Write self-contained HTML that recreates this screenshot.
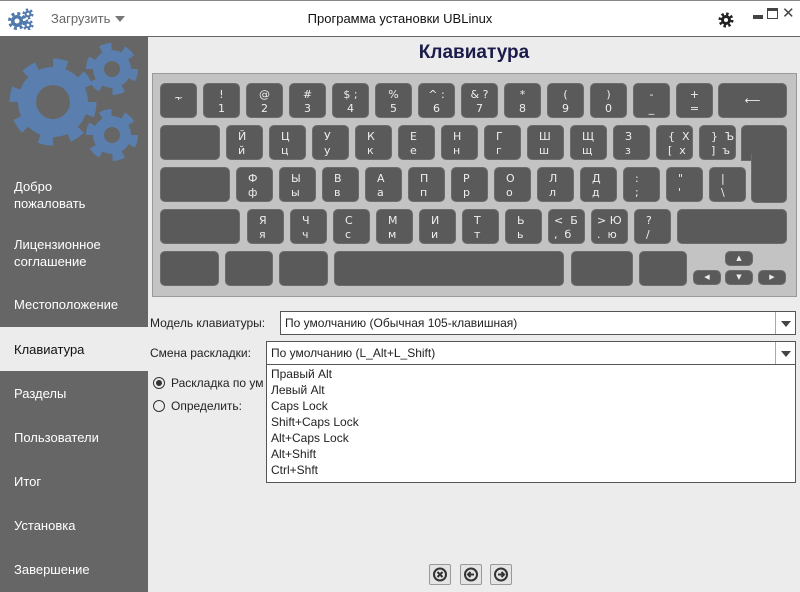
<!DOCTYPE html>
<html><head><meta charset="utf-8"><style>
*{margin:0;padding:0;box-sizing:border-box}
body{width:800px;height:592px;overflow:hidden;background:#ececec;font-family:"Liberation Sans","DejaVu Sans",sans-serif;position:relative;font-size:12px;color:#222}
.a{position:absolute}
#hdr{left:0;top:0;width:800px;height:37px;background:#fff;border-bottom:1px solid #666;border-top:1px solid #888}
#side{left:0;top:37px;width:148px;height:555px;background:#666}
.si{position:absolute;left:14px;color:#fff;font-size:13px;line-height:17px}
#kb{left:152px;top:73px;width:645px;height:224px;background:#c3c3c3;border:1px solid #999}
.k{position:absolute;background:#5a5a5a;border-radius:5px;border:1px solid #6c6c6c;color:#eee;font-family:"DejaVu Sans",sans-serif;font-size:11px;line-height:15px}
.k .t{position:absolute;left:11px;top:3px}
.k .b{position:absolute;left:11px;top:17px}
.k.c .t,.k.c .b{left:0;width:100%;text-align:center}
.combo{position:absolute;background:#fff;border:1px solid #555;font-size:12px;line-height:22px;padding-left:4px}
.arr{position:absolute;right:0;top:0;width:20px;height:22px;border-left:1px solid #aaa}
.arr:after{content:"";position:absolute;left:5px;top:9px;border:5px solid transparent;border-top:6px solid #444;border-bottom:0}
.btn{position:absolute;top:564px;width:22px;height:21px;border:1px solid #999;background:#e4e4e4;border-radius:2px}
</style></head><body>
<div id="hdr" class="a">
 <svg class="a" style="left:8px;top:7px" width="26" height="22" viewBox="0 0 26 22">
  <g fill="#4f79ad"><circle cx="9" cy="13" r="6"/><circle cx="9" cy="13" r="7.5" fill="none" stroke="#4f79ad" stroke-width="3" stroke-dasharray="3 2.9"/><circle cx="9" cy="13" r="2.5" fill="#fff"/>
  <circle cx="20" cy="6" r="3.5"/><circle cx="20" cy="6" r="4.5" fill="none" stroke="#4f79ad" stroke-width="2" stroke-dasharray="2.4 2.3"/><circle cx="20" cy="6" r="1.4" fill="#fff"/>
  <circle cx="20" cy="17" r="3.5"/><circle cx="20" cy="17" r="4.5" fill="none" stroke="#4f79ad" stroke-width="2" stroke-dasharray="2.4 2.3"/><circle cx="20" cy="17" r="1.4" fill="#fff"/></g></svg>
 <div class="a" style="left:51px;top:10px;color:#666;font-size:13px">Загрузить</div>
 <div class="a" style="left:115px;top:15px;border:5px solid transparent;border-top:6px solid #777;border-bottom:0"></div>
 <div class="a" style="left:0;width:800px;top:10px;text-align:center;font-size:13px;color:#111">Программа установки UBLinux</div>
 <svg class="a" style="left:718px;top:11px" width="16" height="16" viewBox="0 0 16 16"><circle cx="8" cy="8" r="5" fill="#222"/><circle cx="8" cy="8" r="6" fill="none" stroke="#222" stroke-width="3" stroke-dasharray="2.4 2.3"/><circle cx="8" cy="8" r="2" fill="#fff"/></svg>
 <div class="a" style="left:753px;top:14px;width:10px;height:4px;background:#444"></div>
 <div class="a" style="left:767px;top:7px;width:11px;height:11px;border:1px solid #444;border-top:3px solid #444"></div>
 <div class="a" style="left:782px;top:3px;font-size:15px;color:#444">✕</div>
</div>
<div id="side" class="a">
 <svg class="a" style="left:0;top:0" width="148" height="130" viewBox="0 37 148 130">
  <g fill="#5a7fae">
   <circle cx="53" cy="102" r="35"/><circle cx="53" cy="102" r="39" fill="none" stroke="#5a7fae" stroke-width="9" stroke-dasharray="14 16.6"/>
   <circle cx="112" cy="69" r="19"/><circle cx="112" cy="69" r="22" fill="none" stroke="#5a7fae" stroke-width="8" stroke-dasharray="11 12"/>
   <circle cx="112" cy="135" r="19"/><circle cx="112" cy="135" r="22" fill="none" stroke="#5a7fae" stroke-width="8" stroke-dasharray="11 12"/>
  </g>
  <circle cx="53" cy="102" r="17" fill="#666"/><circle cx="112" cy="69" r="8" fill="#666"/><circle cx="112" cy="135" r="8" fill="#666"/>
 </svg>
 <div class="si" style="top:141px">Добро<br>пожаловать</div>
 <div class="si" style="top:199px">Лицензионное<br>соглашение</div>
 <div class="si" style="top:259px">Местоположение</div>
 <div class="a" style="left:0;top:290px;width:148px;height:44px;background:#ececec"></div>
 <div class="si" style="top:304px;color:#111">Клавиатура</div>
 <div class="si" style="top:348px">Разделы</div>
 <div class="si" style="top:392px">Пользователи</div>
 <div class="si" style="top:436px">Итог</div>
 <div class="si" style="top:480px">Установка</div>
 <div class="si" style="top:524px">Завершение</div>
</div>
<div class="a" style="left:148px;top:42px;width:652px;text-align:center;font-size:19px;font-weight:bold;color:#1c1c4a">Клавиатура</div>
<div id="kb" class="a">
<!-- row1 y=10 -->
<div class="k c" style="left:7px;top:9px;width:37px;height:35px"><span class="t" style="top:6px">~</span><span class="b" style="top:10px">'</span></div>
<div class="k c" style="left:50px;top:9px;width:37px;height:35px"><span class="t">!</span><span class="b">1</span></div>
<div class="k c" style="left:93px;top:9px;width:37px;height:35px"><span class="t">@</span><span class="b">2</span></div>
<div class="k c" style="left:136px;top:9px;width:37px;height:35px"><span class="t">#</span><span class="b">3</span></div>
<div class="k c" style="left:179px;top:9px;width:37px;height:35px"><span class="t">$ ;</span><span class="b">4</span></div>
<div class="k c" style="left:222px;top:9px;width:37px;height:35px"><span class="t">%</span><span class="b">5</span></div>
<div class="k c" style="left:265px;top:9px;width:37px;height:35px"><span class="t">^ :</span><span class="b">6</span></div>
<div class="k c" style="left:308px;top:9px;width:37px;height:35px"><span class="t">&amp; ?</span><span class="b">7</span></div>
<div class="k c" style="left:351px;top:9px;width:37px;height:35px"><span class="t">*</span><span class="b">8</span></div>
<div class="k c" style="left:394px;top:9px;width:37px;height:35px"><span class="t">(</span><span class="b">9</span></div>
<div class="k c" style="left:437px;top:9px;width:37px;height:35px"><span class="t">)</span><span class="b">0</span></div>
<div class="k c" style="left:480px;top:9px;width:37px;height:35px"><span class="t">-</span><span class="b">_</span></div>
<div class="k c" style="left:523px;top:9px;width:37px;height:35px"><span class="t">+</span><span class="b">=</span></div>
<div class="k c" style="left:565px;top:9px;width:69px;height:35px"><span class="t" style="top:9px">⟵</span></div>
<!-- row2 -->
<div class="k" style="left:7px;top:51px;width:60px;height:35px"></div>
<div class="k" style="left:73px;top:51px;width:37px;height:35px"><span class="t">Й</span><span class="b">й</span></div>
<div class="k" style="left:116px;top:51px;width:37px;height:35px"><span class="t">Ц</span><span class="b">ц</span></div>
<div class="k" style="left:159px;top:51px;width:37px;height:35px"><span class="t">У</span><span class="b">у</span></div>
<div class="k" style="left:202px;top:51px;width:37px;height:35px"><span class="t">К</span><span class="b">к</span></div>
<div class="k" style="left:245px;top:51px;width:37px;height:35px"><span class="t">Е</span><span class="b">е</span></div>
<div class="k" style="left:288px;top:51px;width:37px;height:35px"><span class="t">Н</span><span class="b">н</span></div>
<div class="k" style="left:331px;top:51px;width:37px;height:35px"><span class="t">Г</span><span class="b">г</span></div>
<div class="k" style="left:374px;top:51px;width:37px;height:35px"><span class="t">Ш</span><span class="b">ш</span></div>
<div class="k" style="left:417px;top:51px;width:37px;height:35px"><span class="t">Щ</span><span class="b">щ</span></div>
<div class="k" style="left:460px;top:51px;width:37px;height:35px"><span class="t">З</span><span class="b">з</span></div>
<div class="k" style="left:503px;top:51px;width:37px;height:35px"><span class="t">{ &nbsp;Х</span><span class="b">[ &nbsp;х</span></div>
<div class="k" style="left:546px;top:51px;width:37px;height:35px"><span class="t">} &nbsp;Ъ</span><span class="b">] &nbsp;ъ</span></div>
<div class="k" style="left:588px;top:51px;width:46px;height:36px;border-bottom-left-radius:0"></div>
<div class="k" style="left:598px;top:80px;width:36px;height:49px;border-top-left-radius:0;border-top-right-radius:0;border-top:0"></div>
<!-- row3 -->
<div class="k" style="left:7px;top:93px;width:70px;height:35px"></div>
<div class="k" style="left:83px;top:93px;width:37px;height:35px"><span class="t">Ф</span><span class="b">ф</span></div>
<div class="k" style="left:126px;top:93px;width:37px;height:35px"><span class="t">Ы</span><span class="b">ы</span></div>
<div class="k" style="left:169px;top:93px;width:37px;height:35px"><span class="t">В</span><span class="b">в</span></div>
<div class="k" style="left:212px;top:93px;width:37px;height:35px"><span class="t">А</span><span class="b">а</span></div>
<div class="k" style="left:255px;top:93px;width:37px;height:35px"><span class="t">П</span><span class="b">п</span></div>
<div class="k" style="left:298px;top:93px;width:37px;height:35px"><span class="t">Р</span><span class="b">р</span></div>
<div class="k" style="left:341px;top:93px;width:37px;height:35px"><span class="t">О</span><span class="b">о</span></div>
<div class="k" style="left:384px;top:93px;width:37px;height:35px"><span class="t">Л</span><span class="b">л</span></div>
<div class="k" style="left:427px;top:93px;width:37px;height:35px"><span class="t">Д</span><span class="b">д</span></div>
<div class="k" style="left:470px;top:93px;width:37px;height:35px"><span class="t">:</span><span class="b">;</span></div>
<div class="k" style="left:513px;top:93px;width:37px;height:35px"><span class="t">"</span><span class="b">'</span></div>
<div class="k" style="left:556px;top:93px;width:37px;height:35px"><span class="t">|</span><span class="b">\</span></div>
<!-- row4 -->
<div class="k" style="left:7px;top:135px;width:80px;height:35px"></div>
<div class="k" style="left:94px;top:135px;width:37px;height:35px"><span class="t">Я</span><span class="b">я</span></div>
<div class="k" style="left:137px;top:135px;width:37px;height:35px"><span class="t">Ч</span><span class="b">ч</span></div>
<div class="k" style="left:180px;top:135px;width:37px;height:35px"><span class="t">С</span><span class="b">с</span></div>
<div class="k" style="left:223px;top:135px;width:37px;height:35px"><span class="t">М</span><span class="b">м</span></div>
<div class="k" style="left:266px;top:135px;width:37px;height:35px"><span class="t">И</span><span class="b">и</span></div>
<div class="k" style="left:309px;top:135px;width:37px;height:35px"><span class="t">Т</span><span class="b">т</span></div>
<div class="k" style="left:352px;top:135px;width:37px;height:35px"><span class="t">Ь</span><span class="b">ь</span></div>
<div class="k" style="left:395px;top:135px;width:37px;height:35px"><span class="t" style="left:5px">&lt; &nbsp;Б</span><span class="b" style="left:5px">, &nbsp;б</span></div>
<div class="k" style="left:438px;top:135px;width:37px;height:35px"><span class="t" style="left:5px">&gt; Ю</span><span class="b" style="left:5px">. &nbsp;ю</span></div>
<div class="k" style="left:481px;top:135px;width:37px;height:35px"><span class="t">?</span><span class="b">/</span></div>
<div class="k" style="left:524px;top:135px;width:110px;height:35px"></div>
<!-- row5 -->
<div class="k" style="left:7px;top:177px;width:59px;height:35px"></div>
<div class="k" style="left:72px;top:177px;width:48px;height:35px"></div>
<div class="k" style="left:126px;top:177px;width:49px;height:35px"></div>
<div class="k" style="left:181px;top:177px;width:230px;height:35px"></div>
<div class="k" style="left:418px;top:177px;width:62px;height:35px"></div>
<div class="k" style="left:486px;top:177px;width:48px;height:35px"></div>
<div class="k c" style="left:572px;top:177px;width:28px;height:15px;font-size:7px;line-height:13px;text-align:center">▲</div>
<div class="k c" style="left:540px;top:196px;width:28px;height:15px;font-size:7px;line-height:13px;text-align:center">◀</div>
<div class="k c" style="left:572px;top:196px;width:28px;height:15px;font-size:7px;line-height:13px;text-align:center">▼</div>
<div class="k c" style="left:605px;top:196px;width:28px;height:15px;font-size:7px;line-height:13px;text-align:center">▶</div>
</div>
<div class="a" style="left:150px;top:316px;font-size:12px">Модель клавиатуры:</div>
<div class="combo" style="left:280px;top:311px;width:516px;height:24px">По умолчанию (Обычная 105-клавишная)<div class="arr"></div></div>
<div class="a" style="left:150px;top:346px;font-size:12px">Смена раскладки:</div>
<div class="combo" style="left:266px;top:341px;width:530px;height:24px">По умолчанию (L_Alt+L_Shift)<div class="arr"></div></div>
<div class="a" style="left:153px;top:377px;width:12px;height:12px;border:1px solid #333;border-radius:50%"><div class="a" style="left:2px;top:2px;width:6px;height:6px;background:#333;border-radius:50%"></div></div>
<div class="a" style="left:171px;top:376px;font-size:12px">Раскладка по ум</div>
<div class="a" style="left:153px;top:400px;width:12px;height:12px;border:1px solid #333;border-radius:50%"></div>
<div class="a" style="left:171px;top:399px;font-size:12px">Определить:</div>
<div class="a" style="left:266px;top:365px;width:530px;height:118px;background:#fff;border:1px solid #555;border-top:0;padding:1px 0 0 4px;font-size:12px;line-height:16px">Правый Alt<br>Левый Alt<br>Caps Lock<br>Shift+Caps Lock<br>Alt+Caps Lock<br>Alt+Shift<br>Ctrl+Shft</div>
<div class="btn" style="left:429px"><svg width="20" height="19" viewBox="0 0 20 19"><circle cx="10" cy="9.5" r="6" fill="none" stroke="#333" stroke-width="2"/><path d="M7.5 7l5 5M12.5 7l-5 5" stroke="#333" stroke-width="2"/></svg></div>
<div class="btn" style="left:460px"><svg width="20" height="19" viewBox="0 0 20 19"><circle cx="10" cy="9.5" r="6" fill="none" stroke="#333" stroke-width="2"/><path d="M13 9.5H7M9.5 7l-2.5 2.5 2.5 2.5" stroke="#333" stroke-width="2" fill="none"/></svg></div>
<div class="btn" style="left:490px"><svg width="20" height="19" viewBox="0 0 20 19"><circle cx="10" cy="9.5" r="6" fill="none" stroke="#333" stroke-width="2"/><path d="M7 9.5h6M10.5 7l2.5 2.5-2.5 2.5" stroke="#333" stroke-width="2" fill="none"/></svg></div>
</body></html>
